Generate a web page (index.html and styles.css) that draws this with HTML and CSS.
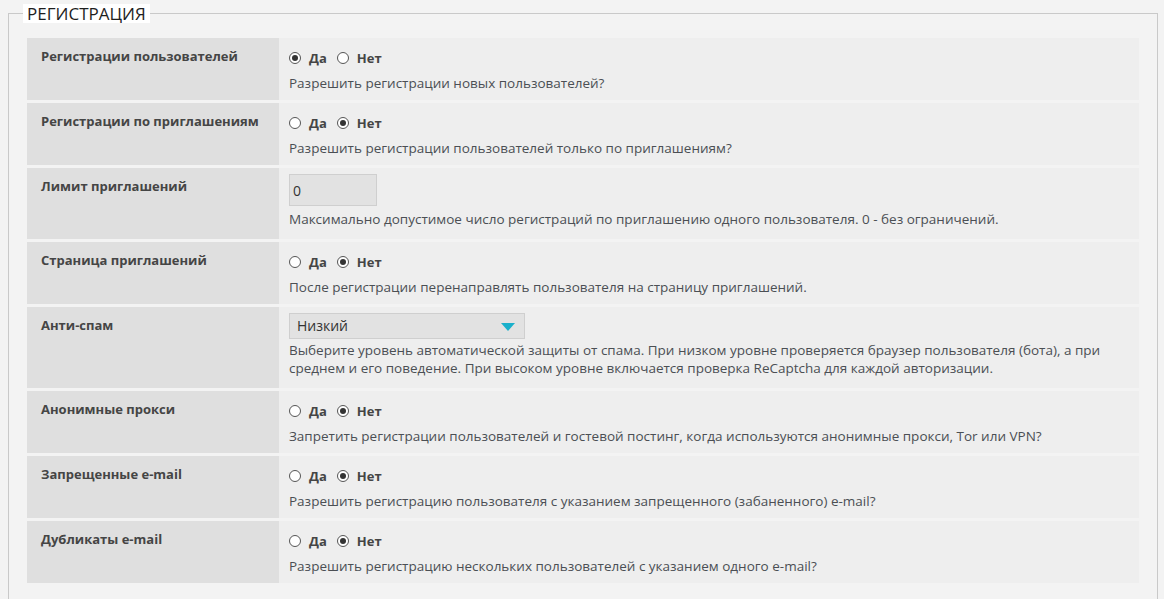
FILE: index.html
```html
<!DOCTYPE html>
<html>
<head>
<meta charset="utf-8" />
<title>Регистрация</title>
<link rel="stylesheet" href="styles.css">
</head>
<body>
<fieldset class="box">
	<legend>Регистрация</legend>
	<table class="opts">
		<tr>
			<th>Регистрации пользователей</th>
			<td><div class="radios"><label><input type="radio" name="r1" checked> Да</label><label><input type="radio" name="r1"> Нет</label></div>
			<div class="hint">Разрешить регистрации новых пользователей?</div></td>
		</tr>
		<tr>
			<th>Регистрации по приглашениям</th>
			<td><div class="radios"><label><input type="radio" name="r2"> Да</label><label><input type="radio" name="r2" checked> Нет</label></div>
			<div class="hint">Разрешить регистрации пользователей только по приглашениям?</div></td>
		</tr>
		<tr>
			<th>Лимит приглашений</th>
			<td class="field"><input type="text" class="num" value="0">
			<div class="hint">Максимально допустимое число регистраций по приглашению одного пользователя. 0 - без ограничений.</div></td>
		</tr>
		<tr>
			<th>Страница приглашений</th>
			<td><div class="radios"><label><input type="radio" name="r4"> Да</label><label><input type="radio" name="r4" checked> Нет</label></div>
			<div class="hint">После регистрации перенаправлять пользователя на страницу приглашений.</div></td>
		</tr>
		<tr>
			<th>Анти-спам</th>
			<td class="field"><div class="select">Низкий<span class="arrow"></span></div>
			<div class="hint">Выберите уровень автоматической защиты от спама. При низком уровне проверяется браузер пользователя (бота), а при среднем и его поведение. При высоком уровне включается проверка ReCaptcha для каждой авторизации.</div></td>
		</tr>
		<tr>
			<th>Анонимные прокси</th>
			<td><div class="radios"><label><input type="radio" name="r6"> Да</label><label><input type="radio" name="r6" checked> Нет</label></div>
			<div class="hint">Запретить регистрации пользователей и гостевой постинг, когда используются анонимные прокси, Tor или VPN?</div></td>
		</tr>
		<tr>
			<th>Запрещенные e-mail</th>
			<td><div class="radios"><label><input type="radio" name="r7"> Да</label><label><input type="radio" name="r7" checked> Нет</label></div>
			<div class="hint">Разрешить регистрацию пользователя с указанием запрещенного (забаненного) e-mail?</div></td>
		</tr>
		<tr>
			<th>Дубликаты e-mail</th>
			<td><div class="radios"><label><input type="radio" name="r8"> Да</label><label><input type="radio" name="r8" checked> Нет</label></div>
			<div class="hint">Разрешить регистрацию нескольких пользователей с указанием одного e-mail?</div></td>
		</tr>
	</table>
</fieldset>
</body>
</html>
```
FILE: styles.css
```css
*{margin:0;padding:0;box-sizing:border-box;}
body{background:#f3f3f3;font-family:"Open Sans","Noto Sans",sans-serif;font-size:13px;line-height:18px;color:#4a4a4a;padding-top:4px;}

.box{margin:0 6px 0 8px;border:1px solid #c9c9c9;padding:12px 18px 30px;}
.box legend{margin-left:-4px;padding:0 4px;background:#fff;font-size:17px;line-height:19px;text-transform:uppercase;color:#1e1e1e;}

.opts{width:100%;border-collapse:separate;border-spacing:0 3px;}
.opts th{width:252px;background:#dfdfdf;text-align:left;vertical-align:top;padding:9px 14px;font-weight:bold;color:#454545;}
.opts td{background:#eeeeee;vertical-align:top;padding:6px 10px 8px;}
.opts td.field{padding-bottom:11px;}

.radios{height:28px;display:flex;align-items:center;font-weight:bold;color:#454545;}
.radios label{display:flex;align-items:center;margin-right:10px;}
.radios input{-webkit-appearance:none;appearance:none;width:12px;height:12px;border:1px solid #555;border-radius:50%;background:#fff;margin-right:8px;display:grid;place-content:center;}
.radios input:checked::before{content:'';width:6px;height:6px;border-radius:50%;background:#333;}

.hint{margin-top:2px;font-size:13.5px;color:#4b4f54;}

.num{display:block;width:88px;height:32px;margin-bottom:4px;border:1px solid #cfcfcf;background:#e2e2e2;font:14px "Open Sans",sans-serif;color:#333;padding:0 3px;}
.select{position:relative;width:236px;height:26px;margin-bottom:2px;border:1px solid #cfcfcf;background:#e2e2e2;font-size:14px;line-height:24px;color:#333;padding:0 7px;}
.select .arrow{position:absolute;right:9px;top:9px;border-left:7px solid transparent;border-right:7px solid transparent;border-top:8px solid #1ab0cb;}
```
